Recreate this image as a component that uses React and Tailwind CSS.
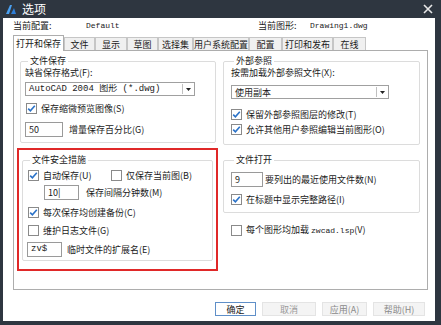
import React from 'react';

const cjk = { fontFamily: '"Noto Sans CJK SC", "Noto Sans", sans-serif' };
const mono = { fontFamily: '"Liberation Mono", "Noto Sans CJK SC", monospace' };

const Check = ({ on }) => (
  <svg width="11" height="11" viewBox="0 0 11 11" className="shrink-0">
    <rect x="0.5" y="0.5" width="10" height="10" fill="#fff" stroke="#8a8a8a" />
    {on && <path d="M2.2 5.6 L4.4 7.8 L8.8 2.8" fill="none" stroke="#2a72c8" strokeWidth="1.6" />}
  </svg>
);

const Box = ({ label, on, className = '' }) => (
  <div className={`flex items-center gap-[4px] h-[12px] ${className}`}>
    <Check on={on} />
    <span className="whitespace-nowrap">{label}</span>
  </div>
);

const Input = ({ value, w, m }) => (
  <div className={`h-[15px] shrink-0 border border-[#9a9a9a] bg-white pl-[3px] flex items-center text-[9px] ${w}`} style={m ? mono : undefined}>
    {value}
  </div>
);

const Combo = ({ value, w, m }) => (
  <div className={`h-[14px] border border-[#a0a0a0] bg-white flex items-center ${w}`}>
    <span className="flex-1 pl-[3px] text-[9px] whitespace-nowrap overflow-hidden" style={m ? mono : undefined}>{value}</span>
    <span className="h-[10px] border-l border-[#c0c0c0]" />
    <svg width="11" height="10" viewBox="0 0 11 10"><path d="M3 4 L8 4 L5.5 7 Z" fill="#222" /></svg>
  </div>
);

const Group = ({ title, className = '', children }) => (
  <fieldset className={`border border-[#dcdcdc] rounded-[2px] ${className}`}>
    <legend className="ml-[3px] px-[2px] leading-[10px]">{title}</legend>
    {children}
  </fieldset>
);

const tabs = [
  ['打开和保存', 'w-[51px]'],
  ['文件', 'w-[31px]'],
  ['显示', 'w-[32px]'],
  ['草图', 'w-[31px]'],
  ['选择集', 'w-[35px]'],
  ['用户系统配置', 'w-[56px]'],
  ['配置', 'w-[33px]'],
  ['打印和发布', 'w-[51px]'],
  ['在线', 'w-[33px]'],
];

export default function App() {
  return (
    <div className="w-[441px] h-[325px] bg-[#2e3640] flex flex-col text-[9px] leading-[11px] text-[#1a1a1a]" style={cjk}>
      {/* title bar */}
      <div className="h-[18px] flex items-center pl-[5px] pr-[8px] text-white">
        <svg width="12" height="12" viewBox="0 0 12 12">
          <path d="M1 11 L5 2 L7 2 L4 11 Z" fill="#4aa0f0" />
          <path d="M6 11 L9 5 L11 11 Z" fill="#2f7fd8" />
        </svg>
        <span className="ml-[5px] text-[12px] leading-none">选项</span>
        <svg className="ml-auto" width="10" height="10" viewBox="0 0 10 10">
          <path d="M1 1 L9 9 M9 1 L1 9" stroke="#e8e8e8" strokeWidth="1.6" />
        </svg>
      </div>

      <div className="flex-1 bg-white ml-[3px] mr-[6px] mb-[4px] flex flex-col">
        {/* current profile */}
        <div className="h-[14px] flex items-center pl-[10px] whitespace-nowrap">
          <span className="w-[73px]">当前配置:</span>
          <span className="w-[172px] text-[8px]" style={mono}>Default</span>
          <span className="w-[52px]">当前图形:</span>
          <span className="text-[8px]" style={mono}>Drawing1.dwg</span>
        </div>

        {/* tabs */}
        <div className="mt-[3px] ml-[10px] flex items-end h-[16px]">
          {tabs.map(([t, w], i) => (
            <div
              key={t}
              className={`${w} flex items-center justify-center border border-b-0 whitespace-nowrap ${
                i === 0 ? 'h-[16px] bg-white border-[#adadad] relative z-10' : 'h-[14px] bg-[#f0f0f0] border-[#c6c6c6]'
              }`}
            >
              {t}
            </div>
          ))}
        </div>

        {/* panel */}
        <div className="ml-[10px] mr-[7px] -mt-px h-[240px] border border-[#adadad] flex">
          <div className="w-[205px] pl-[3px] pt-[5px] flex flex-col">
            <Group title="文件保存" className="mx-[3px] h-[87px] px-[4px]">
              <div className="mt-[1px]">缺省保存格式(F):</div>
              <div className="mt-[4px]"><Combo value="AutoCAD 2004 图形 (*.dwg)" w="w-[170px]" m /></div>
              <Box label="保存缩微预览图像(S)" on className="mt-[6px] ml-[1px]" />
              <div className="mt-[8px] flex items-center gap-[6px]">
                <Input value="50" w="w-[38px]" />
                <span>增量保存百分比(G)</span>
              </div>
            </Group>

            <div className="mt-[5px] h-[123px] w-[201px] border-2 border-[#e02828] px-[3px] pt-[5px]">
              <Group title="文件安全措施" className="h-[106px] px-[4px]">
                <div className="flex mt-[4px]">
                  <Box label="自动保存(U)" on className="w-[83px] ml-[1px]" />
                  <Box label="仅保存当前图(B)" />
                </div>
                <div className="mt-[4px] ml-[17px] flex items-center gap-[7px]">
                  <Input value="10|" w="w-[35px]" />
                  <span>保存间隔分钟数(M)</span>
                </div>
                <Box label="每次保存均创建备份(C)" on className="mt-[6px] ml-[1px]" />
                <Box label="维护日志文件(G)" className="mt-[6px] ml-[1px]" />
                <div className="mt-[6px] flex items-center gap-[5px]">
                  <Input value="zv$" w="w-[35px]" m />
                  <span>临时文件的扩展名(E)</span>
                </div>
              </Group>
            </div>
          </div>

          <div className="flex-1 pt-[5px] pl-[4px] pr-[7px] flex flex-col">
            <Group title="外部参照" className="h-[89px] px-[7px]">
              <div className="mt-[1px]">按需加载外部参照文件(X):</div>
              <div className="mt-[7px]"><Combo value="使用副本" w="w-[158px]" /></div>
              <Box label="保留外部参照图层的修改(T)" on className="mt-[9px]" />
              <Box label="允许其他用户参照编辑当前图形(O)" on className="mt-[3px]" />
            </Group>
            <Group title="文件打开" className="mt-[10px] h-[58px] px-[7px]">
              <div className="mt-[7px] flex items-center gap-[2px]">
                <Input value="9" w="w-[32px]" />
                <span>要列出的最近使用文件数(N)</span>
              </div>
              <Box label="在标题中显示完整路径(I)" on className="mt-[6px]" />
            </Group>
            <Box label={<>每个图形均加载 <span className="text-[8px]" style={mono}>zwcad.lsp</span>(V)</>} className="mt-[11px] ml-[8px]" />
          </div>
        </div>

        {/* buttons */}
        <div className="mt-[12px] flex gap-[6px] pl-[212px]">
          <div className="w-[41px] h-[14px] border border-[#5f8fc8] flex items-center justify-center">确定</div>
          <div className="w-[54px] h-[14px] border border-[#e4e4e4] bg-[#f4f4f4] flex items-center justify-center text-[#9a9a9a]">取消</div>
          <div className="w-[45px] h-[14px] border border-[#e4e4e4] bg-[#f4f4f4] flex items-center justify-center text-[#8a8a8a]">应用(A)</div>
          <div className="w-[52px] h-[14px] border border-[#e4e4e4] bg-[#f4f4f4] flex items-center justify-center text-[#8a8a8a]">帮助(H)</div>
        </div>
      </div>
    </div>
  );
}
